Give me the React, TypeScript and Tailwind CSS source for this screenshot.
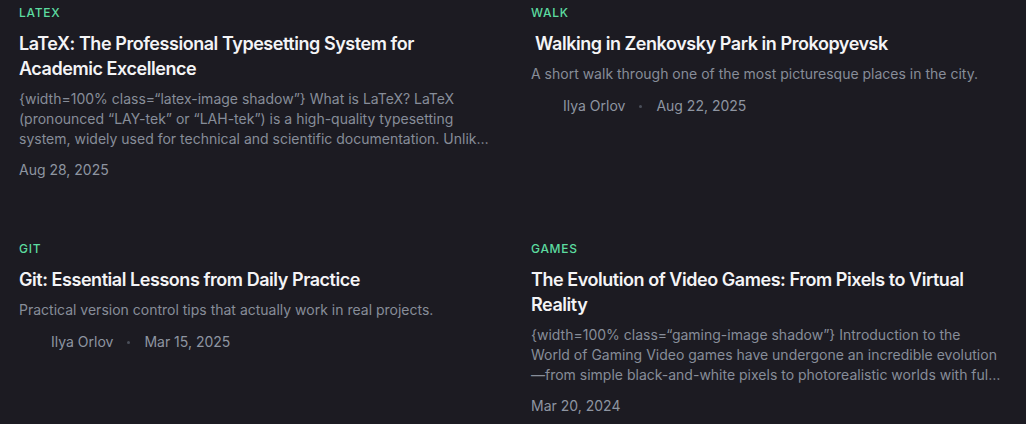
import React from "react";

type Post = {
  tag: string;
  title: string;
  excerpt: string;
  date: string;
  author?: string;
};

const POSTS: Post[] = [
  {
    tag: "LaTeX",
    title: "LaTeX: The Professional Typesetting System for Academic Excellence",
    excerpt:
      "{width=100% class=“latex-image shadow”} What is LaTeX? LaTeX (pronounced “LAY-tek” or “LAH-tek”) is a high-quality typesetting system, widely used for technical and scientific documentation. Unlik…",
    date: "Aug 28, 2025",
  },
  {
    tag: "Walk",
    title: "\u00a0Walking in Zenkovsky Park in Prokopyevsk",
    excerpt: "A short walk through one of the most picturesque places in the city.",
    date: "Aug 22, 2025",
    author: "Ilya Orlov",
  },
  {
    tag: "Git",
    title: "Git: Essential Lessons from Daily Practice",
    excerpt: "Practical version control tips that actually work in real projects.",
    date: "Mar 15, 2025",
    author: "Ilya Orlov",
  },
  {
    tag: "Games",
    title: "The Evolution of Video Games: From Pixels to Virtual Reality",
    excerpt:
      "{width=100% class=“gaming-image shadow”} Introduction to the World of Gaming Video games have undergone an incredible evolution—from simple black-and-white pixels to photorealistic worlds with ful…",
    date: "Mar 20, 2024",
  },
];

const PostCard = ({ post }: { post: Post }) => {
  return (
    <article className="flex flex-col">
      <span className="text-[12px] leading-4 font-medium uppercase tracking-[0.06em] text-[#5cdca0]">
        {post.tag}
      </span>
      <h2 className="mt-[10px] text-[18px] leading-[25px] font-semibold text-[#f4f4f6] tracking-[-0.025em]">
        {post.title}
      </h2>
      <p className="mt-[8px] text-[14px] leading-[20px] text-[#878d99]">{post.excerpt}</p>
      {post.author ? (
        <div className="mt-[10px] flex flex-row items-center text-[14px] leading-5 text-[#8e95a1]">
          <div className="w-6 h-6 rounded-full" />
          <span className="ml-2">{post.author}</span>
          <span className="mx-[14px] w-[3px] h-[3px] rounded-full bg-[#4a4f5a]" />
          <span>{post.date}</span>
        </div>
      ) : (
        <p className="mt-[11px] text-[14px] leading-5 text-[#8e95a1]">{post.date}</p>
      )}
    </article>
  );
};

export default function App() {
  return (
    <div
      className="min-h-screen w-full bg-[#1c1b22] pt-[5px] px-[19px]"
      style={{ fontFamily: "Inter, 'Noto Sans', sans-serif" }}
    >
      <div className="grid grid-cols-[470px_470px] gap-x-[42px] gap-y-[61px]">
        {POSTS.map((post, index) => (
          <PostCard key={index} post={post} />
        ))}
      </div>
    </div>
  );
}
